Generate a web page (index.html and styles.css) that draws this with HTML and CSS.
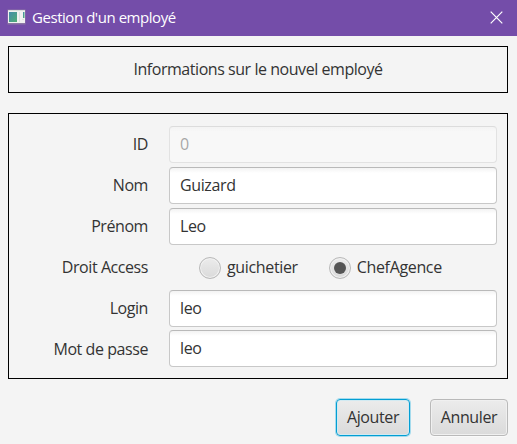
FILE: index.html
```html
<!DOCTYPE html>
<html lang="fr">
<head>
<meta charset="utf-8">
<title>Gestion d'un employé</title>
<link rel="stylesheet" href="styles.css">
</head>
<body>
<div class="window">
  <header class="titlebar">
    <svg class="app-icon" width="19" height="16" viewBox="0 0 19 16">
      <defs><linearGradient id="pane" x1="0" y1="0" x2="1" y2="1"><stop offset="0" stop-color="#458cab"/><stop offset="1" stop-color="#50ad75"/></linearGradient></defs>
      <rect x="0.5" y="0.5" width="18" height="15" fill="#8b77a5"/>
      <rect x="1" y="1" width="17" height="13" fill="#f1f1f1"/>
      <path d="M1 1.5h17" stroke="#d8dcd8"/>
      <rect x="2" y="3" width="8" height="10" fill="url(#pane)"/>
      <path d="M12.5 3v10" stroke="#dfe2e2"/>
      <rect x="16" y="3" width="1.5" height="6" fill="url(#pane)"/>
      <path d="M15 10.5h2" stroke="#dfe2e2"/>
    </svg>
    <h1 class="title">Gestion d'un employé</h1>
    <svg class="close" width="13" height="13" viewBox="0 0 13 13"><path d="M0.7 0.7l11.6 11.6M12.3 0.7l-11.6 11.6" stroke="#fff" stroke-width="1.2"/></svg>
  </header>
  <main class="content">
    <section class="panel heading">Informations sur le nouvel employé</section>
    <form class="panel form">
      <label class="label" for="id">ID</label>
      <input class="field" id="id" value="0" disabled>
      <label class="label" for="nom">Nom</label>
      <input class="field" id="nom" value="Guizard">
      <label class="label" for="prenom">Prénom</label>
      <input class="field" id="prenom" value="Leo">
      <span class="label">Droit Access</span>
      <div class="radios">
        <span class="radio"><i class="dot"></i><span>guichetier</span></span>
        <span class="radio"><i class="dot selected"></i><span>ChefAgence</span></span>
      </div>
      <label class="label" for="login">Login</label>
      <input class="field" id="login" value="leo">
      <label class="label" for="passe">Mot de passe</label>
      <input class="field" id="passe" value="leo">
    </form>
    <footer class="actions">
      <button class="button focused" type="button">Ajouter</button>
      <button class="button cancel" type="button">Annuler</button>
    </footer>
  </main>
</div>
</body>
</html>
```
FILE: styles.css
```css
* { box-sizing: border-box; }
body {
  margin: 0;
  background: #f4f4f4;
  color: #333;
  font: 16px/22px "Open Sans", "Noto Sans", sans-serif;
  letter-spacing: -0.38px;
}
.window { width: 517px; height: 444px; overflow: hidden; }
.titlebar {
  display: flex;
  align-items: center;
  height: 36px;
  padding: 0 14px 0 7px;
  background: #744da9;
  color: #fff;
}
.app-icon { margin-right: 6px; margin-top: -2px; }
.title { flex: 1; margin: 0; padding-bottom: 2px; font-size: 15px; font-weight: 400; letter-spacing: -0.45px; }
.close { margin-top: -2px; }
.content { padding: 10px 9px 0 8px; }
.panel { border: 1px solid #000; }
.heading { height: 47px; line-height: 44px; text-align: center; letter-spacing: -0.45px; }
.form {
  display: grid;
  grid-template-columns: 139px 328px;
  grid-template-rows: 37px 37px 37px 37px 37px 37px;
  column-gap: 21px;
  row-gap: 4px;
  height: 266px;
  margin-top: 20px;
  padding-top: 12px;
}
.label { align-self: center; padding-bottom: 2px; text-align: right; letter-spacing: -0.43px; }
.field {
  width: 328px;
  height: 37px;
  padding: 0 10px 2px;
  border: 1px solid #c8c8c8;
  border-top-color: #b9b9b9;
  border-radius: 4px;
  background: linear-gradient(#f3f3f3, #fff 5px);
  color: #333;
  font: inherit;
  letter-spacing: inherit;
}
.field:disabled { opacity: 0.4; }
#passe { margin-top: -1px; }
.radios { display: flex; align-items: center; padding-left: 30px; gap: 31px; }
.radio { display: flex; align-items: center; gap: 6px; letter-spacing: -0.35px; }
.radio span { padding-bottom: 1px; }
.dot {
  display: grid;
  place-items: center;
  width: 22px;
  height: 22px;
  border: 1px solid #b9b9b9;
  border-radius: 50%;
  background: linear-gradient(#ececec, #dadada);
  box-shadow: inset 0 0 0 1px #f2f2f2;
}
.selected::after { content: ""; width: 12px; height: 12px; border-radius: 50%; background: #555; }
.actions { display: flex; justify-content: flex-end; gap: 20px; margin-top: 20px; }
.button {
  width: 78px;
  height: 37px;
  padding: 0 0 1px;
  border: 1px solid #b9b9b9;
  border-radius: 4px;
  background: linear-gradient(#ececec, #dadada);
  box-shadow: inset 0 0 0 1px #f0f0f0, 0 1px 0 #fafafa;
  color: #333;
  font: inherit;
  letter-spacing: inherit;
}
.focused {
  width: 74px;
  border-color: #039ed3;
  box-shadow: inset 0 0 0 1px #d2eaf2, 0 0 0 1px #a5dbed;
}
```
